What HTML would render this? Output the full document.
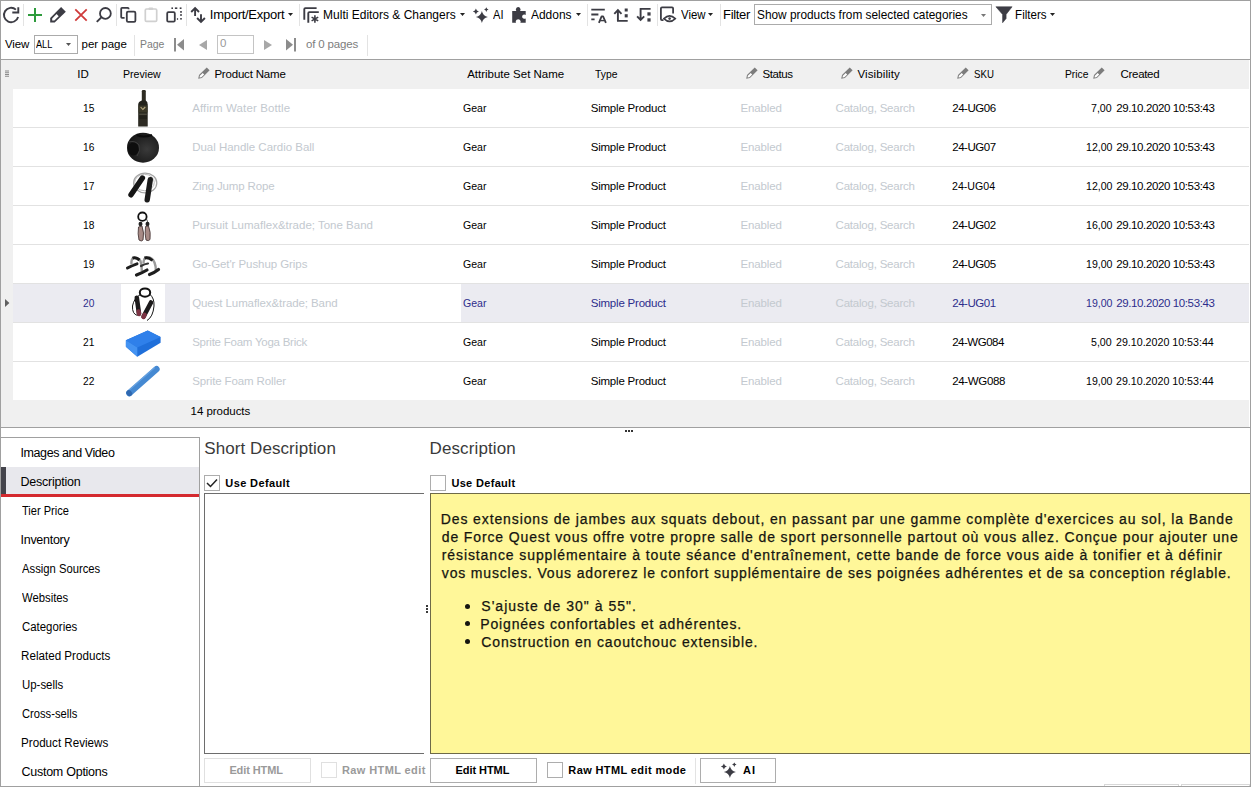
<!DOCTYPE html>
<html><head><meta charset="utf-8"><style>
html,body{margin:0;padding:0;background:#fff}
#r{position:relative;width:1251px;height:787px;overflow:hidden;background:#fff;font-family:"Liberation Sans",sans-serif}
.t{position:absolute;white-space:pre;font-family:"Liberation Sans",sans-serif}
.b{position:absolute}
svg.b{overflow:visible}
</style></head><body><div id="r">
<div class="b" style="left:0px;top:0px;width:1251px;height:1px;background:#a0a0a0"></div>
<div class="b" style="left:0px;top:0px;width:1px;height:787px;background:#a0a0a0"></div>
<div class="b" style="left:1250px;top:0px;width:1px;height:787px;background:#a0a0a0"></div>
<div class="b" style="left:0px;top:786px;width:1251px;height:1px;background:#a0a0a0"></div>
<div class="b" style="left:23px;top:4px;width:1px;height:22px;background:#e3e3e3"></div>
<div class="b" style="left:116px;top:4px;width:1px;height:22px;background:#e3e3e3"></div>
<div class="b" style="left:186px;top:4px;width:1px;height:22px;background:#e3e3e3"></div>
<div class="t" style="left:209.80px;top:7.00px;font-size:13px;line-height:15px;color:#000;letter-spacing:-0.268px;">Import/Export</div>
<svg class="b" style="left:288px;top:13px" width="5" height="3" viewBox="0 0 5 3"><path d="M0 0 H5 L2.5 3 Z" fill="#222"/></svg>
<div class="b" style="left:299px;top:4px;width:1px;height:22px;background:#e3e3e3"></div>
<div class="t" style="left:322.50px;top:7.00px;font-size:13px;line-height:15px;color:#000;transform:scaleX(0.9220);transform-origin:1.00px 0;">Multi Editors &amp; Changers</div>
<svg class="b" style="left:460px;top:13px" width="5" height="3" viewBox="0 0 5 3"><path d="M0 0 H5 L2.5 3 Z" fill="#222"/></svg>
<div class="t" style="left:493.00px;top:7.00px;font-size:13px;line-height:15px;color:#000;transform:scaleX(0.8568);transform-origin:0.00px 0;">AI</div>
<div class="t" style="left:531.00px;top:7.00px;font-size:13px;line-height:15px;color:#000;transform:scaleX(0.9195);transform-origin:0.00px 0;">Addons</div>
<svg class="b" style="left:576px;top:13px" width="5" height="3" viewBox="0 0 5 3"><path d="M0 0 H5 L2.5 3 Z" fill="#222"/></svg>
<div class="b" style="left:587px;top:4px;width:1px;height:22px;background:#e3e3e3"></div>
<div class="b" style="left:657px;top:4px;width:1px;height:22px;background:#e3e3e3"></div>
<div class="t" style="left:681.00px;top:7.00px;font-size:13px;line-height:15px;color:#000;transform:scaleX(0.8755);transform-origin:0.00px 0;">View</div>
<svg class="b" style="left:708px;top:13px" width="5" height="3" viewBox="0 0 5 3"><path d="M0 0 H5 L2.5 3 Z" fill="#222"/></svg>
<div class="b" style="left:720px;top:4px;width:1px;height:22px;background:#e3e3e3"></div>
<div class="t" style="left:723.00px;top:7.00px;font-size:13px;line-height:15px;color:#000;letter-spacing:-0.312px;">Filter</div>
<div class="b" style="left:754px;top:4px;width:238px;height:21px;border:1px solid #ababab;box-sizing:border-box;background:#fff"></div>
<div class="t" style="left:757.00px;top:7.00px;font-size:13px;line-height:15px;color:#000;transform:scaleX(0.9106);transform-origin:0.00px 0;">Show products from selected categories</div>
<svg class="b" style="left:981px;top:14px" width="5" height="3" viewBox="0 0 5 3"><path d="M0 0 H5 L2.5 3 Z" fill="#777"/></svg>
<div class="t" style="left:1015.00px;top:7.00px;font-size:13px;line-height:15px;color:#000;transform:scaleX(0.8886);transform-origin:1.00px 0;">Filters</div>
<svg class="b" style="left:1050px;top:13px" width="5" height="3" viewBox="0 0 5 3"><path d="M0 0 H5 L2.5 3 Z" fill="#222"/></svg>
<svg class="b" style="left:0;top:0" width="1251" height="30" viewBox="0 0 1251 30"><path d="M15.9 9.6 A7.2 7.2 0 1 0 18.1 16.9" fill="none" stroke="#3c3c44" stroke-width="1.9"/><path d="M12.3 12.5 H18.3 V7.3" fill="none" stroke="#3c3c44" stroke-width="1.9"/><path d="M35 8 V22 M28 15 H42" stroke="#2e9b3c" stroke-width="2"/><path d="M61.1 7.1 L65.8 11.8 L54.7 22.4 L50.2 22.4 L50.2 17.9 Z" fill="#3c3c44"/><path d="M52.2 20.6 L52.2 18.6 L56.6 14.1 L58.7 16.2 L54.3 20.6 Z" fill="#fff"/><path d="M75.3 9.3 L86.7 20.7 M86.7 9.3 L75.3 20.7" stroke="#cf3a3a" stroke-width="1.8"/><circle cx="105.4" cy="13.4" r="5.4" fill="none" stroke="#3c3c44" stroke-width="1.8"/><path d="M101.6 17.1 L96.8 21.9" stroke="#3c3c44" stroke-width="2"/><path d="M128.6 9.3 V8.7 Q128.6 7.9 127.8 7.9 H122 Q121.2 7.9 121.2 8.7 V17 Q121.2 17.8 122 17.8 H124.6" fill="none" stroke="#3c3c44" stroke-width="1.8"/><rect x="126.8" y="11.6" width="8.6" height="10.3" rx="1.3" fill="none" stroke="#3c3c44" stroke-width="1.8"/><rect x="145.3" y="9" width="11.4" height="12.4" rx="1.2" fill="none" stroke="#d0d0d0" stroke-width="1.7"/><rect x="148.6" y="7.5" width="4.6" height="2.6" rx="0.8" fill="#d0d0d0"/><rect x="167.2" y="12.2" width="7.6" height="9.4" rx="1.2" fill="none" stroke="#3c3c44" stroke-width="1.8"/><g fill="#3c3c44"><rect x="171.4" y="7.4" width="1.6" height="1.6"/><rect x="174.9" y="7.4" width="2.4" height="1.6"/><rect x="179.7" y="7.4" width="1.8" height="1.6"/><rect x="180.2" y="11" width="1.6" height="1.8"/><rect x="180.2" y="14.1" width="1.6" height="1.8"/><rect x="180.2" y="18" width="1.6" height="1.6"/><rect x="176.9" y="18.2" width="1.2" height="1.6"/></g><path d="M195.1 16 V8.5 M191.2 12 L195.1 8.1 L199 12" fill="none" stroke="#3c3c44" stroke-width="1.9"/><path d="M201 14.2 V21.5 M197.1 18 L201 21.9 L204.9 18" fill="none" stroke="#3c3c44" stroke-width="1.9"/><path d="M304.3 19.7 V9.2 Q304.3 8.1 305.4 8.1 H316.6" fill="none" stroke="#3c3c44" stroke-width="1.9"/><path d="M308.3 22.7 V13.2 Q308.3 12.1 309.4 12.1 H318.8" fill="none" stroke="#3c3c44" stroke-width="1.9"/><path d="M314.9 15.2 V22.8 M311.6 17.1 L318.2 20.9 M318.2 17.1 L311.6 20.9" stroke="#3c3c44" stroke-width="1.6"/><path d="M481.9 11.100000000000001 Q482.91999999999996 16.080000000000002 487.9 17.1 Q482.91999999999996 18.12 481.9 23.1 Q480.88 18.12 475.9 17.1 Q480.88 16.080000000000002 481.9 11.100000000000001 Z" fill="#3c3c44"/><path d="M475.9 8.4 Q476.40999999999997 10.89 478.9 11.4 Q476.40999999999997 11.91 475.9 14.4 Q475.39 11.91 472.9 11.4 Q475.39 10.89 475.9 8.4 Z" fill="#3c3c44"/><path d="M486.3 7.3 Q486.69100000000003 9.209 488.6 9.6 Q486.69100000000003 9.991 486.3 11.899999999999999 Q485.909 9.991 484.0 9.6 Q485.909 9.209 486.3 7.3 Z" fill="#3c3c44"/><path d="M512.2 11 H516.4 Q515.6 9.9 515.9 8.9 Q516.5 7 518.2 7 Q519.9 7 520.5 8.9 Q520.8 9.9 520 11 H525.7 V15 Q524.9 14.4 523.9 14.6 Q522.1 15 522.1 16.7 Q522.1 18.4 523.9 18.8 Q524.9 19 525.7 18.4 V22.8 H520.3 Q520.9 21.9 520.6 21 Q520.1 19.3 518.2 19.3 Q516.3 19.3 515.8 21 Q515.5 21.9 516.1 22.8 H512.2 Z" fill="#3c3c44"/><path d="M591.3 9.6 H604.8 M591.3 14.5 H598.4 M591.3 19.4 H594.6" stroke="#3c3c44" stroke-width="1.9"/><path d="M598.9 22.8 L601.6 16.4 H603.1 L605.9 22.8" fill="none" stroke="#3c3c44" stroke-width="1.8" stroke-linejoin="round"/><path d="M600.2 20.6 H604.5" stroke="#3c3c44" stroke-width="1.4"/><path d="M617.9 21 V10.2 M614.3 13.8 L617.9 10.2 L621.5 13.8 M617 20.9 H627.7" fill="none" stroke="#3c3c44" stroke-width="1.9"/><rect x="624.7" y="8.5" width="3" height="3" fill="#3c3c44"/><rect x="624.7" y="14.2" width="3" height="3.2" fill="#3c3c44"/><path d="M640.6 8.9 V20.2 M637.1 16.4 L640.6 19.9 L644.2 16.4 M639.7 8.9 H650.6" fill="none" stroke="#3c3c44" stroke-width="1.9"/><rect x="647.4" y="12.3" width="3.2" height="3.3" fill="#3c3c44"/><rect x="647.4" y="18.3" width="3.2" height="3.3" fill="#3c3c44"/><path d="M663.5 20.2 H662 Q660.9 20.2 660.9 19.1 V8.5 Q660.9 7.4 662 7.4 H672 Q673.1 7.4 673.1 8.5 V13.6" fill="none" stroke="#3c3c44" stroke-width="1.8"/><path d="M663.9 18.6 Q669.6 13 675.3 18.6 Q669.6 24.2 663.9 18.6 Z" fill="#fff" stroke="#3c3c44" stroke-width="1.6"/><circle cx="669.6" cy="18.6" r="1.3" fill="#3c3c44"/><path d="M995.9 6.8 H1012.1 L1006.1 14.4 V18.6 L1002.6 22.7 V14.4 Z" fill="#3c3c44" stroke="#3c3c44" stroke-width="0.6" stroke-linejoin="round"/></svg>
<div class="t" style="left:5.00px;top:37.52px;font-size:11.5px;line-height:13px;color:#000;letter-spacing:-0.138px;">View</div>
<div class="b" style="left:34px;top:35px;width:44px;height:19px;border:1px solid #ababab;box-sizing:border-box;background:#fff"></div>
<div class="t" style="left:36.00px;top:37.52px;font-size:11.5px;line-height:13px;color:#000;transform:scaleX(0.7975);transform-origin:0.00px 0;">ALL</div>
<svg class="b" style="left:66px;top:43px" width="5" height="3" viewBox="0 0 5 3"><path d="M0 0 H5 L2.5 3 Z" fill="#555"/></svg>
<div class="t" style="left:81.50px;top:37.52px;font-size:11.5px;line-height:13px;color:#000;letter-spacing:-0.000px;">per page</div>
<div class="b" style="left:134px;top:35px;width:1px;height:21px;background:#e3e3e3"></div>
<div class="t" style="left:140.40px;top:37.52px;font-size:11.5px;line-height:13px;color:#7d7d7d;transform:scaleX(0.9070);transform-origin:0.00px 0;">Page</div>
<svg class="b" style="left:174px;top:38px" width="11" height="14" viewBox="0 0 11 14"><rect x="0" y="0" width="2" height="13.5" fill="#8c8c8c"/><path d="M10 1 V12.5 L3 6.75 Z" fill="#8c8c8c"/></svg>
<svg class="b" style="left:199px;top:39.5px" width="8" height="10" viewBox="0 0 8 10"><path d="M8 0 V10 L0 5 Z" fill="#a8a8a8"/></svg>
<div class="b" style="left:217px;top:35px;width:37px;height:19px;border:1px solid #c4c4c4;box-sizing:border-box;background:#fff"></div>
<div class="t" style="left:220.00px;top:37.12px;font-size:11.5px;line-height:13px;color:#999;">0</div>
<svg class="b" style="left:263.5px;top:39.5px" width="8" height="10" viewBox="0 0 8 10"><path d="M0 0 V10 L8 5 Z" fill="#a8a8a8"/></svg>
<svg class="b" style="left:286px;top:38px" width="11" height="14" viewBox="0 0 11 14"><path d="M0 1 V12.5 L7 6.75 Z" fill="#8c8c8c"/><rect x="8" y="0" width="2" height="13.5" fill="#8c8c8c"/></svg>
<div class="t" style="left:306.00px;top:37.52px;font-size:11.5px;line-height:13px;color:#7d7d7d;letter-spacing:-0.173px;">of 0 pages</div>
<div class="b" style="left:367px;top:35px;width:1px;height:21px;background:#e3e3e3"></div>
<div class="b" style="left:1px;top:59px;width:1249px;height:1px;background:#a0a0a0"></div>
<div class="b" style="left:1px;top:60px;width:1248px;height:29px;background:#f0f0f0"></div>
<div class="b" style="left:1px;top:88px;width:12px;height:312px;background:#f0f0f0"></div>
<svg class="b" style="left:5px;top:70px" width="4" height="7" viewBox="0 0 4 7"><path d="M0 1 H4 M0 2.75 H4 M0 4.5 H4 M0 6.25 H4" stroke="#8a8a8a" stroke-width="1"/></svg>
<div class="t" style="left:77.20px;top:67.92px;font-size:11.5px;line-height:13px;color:#000;letter-spacing:0.005px;">ID</div>
<div class="t" style="left:123.30px;top:67.92px;font-size:11.5px;line-height:13px;color:#000;transform:scaleX(0.9232);transform-origin:0.00px 0;">Preview</div>
<svg class="b" style="left:198px;top:67px" width="12" height="12" viewBox="0 0 12 12"><path d="M8.7 0.4 L11.6 3.3 L3.9 11 L0.2 11.8 L1 8.1 Z" fill="#7c7c7c"/><path d="M1.5 10.5 L1.9 8.8 L4.7 6 L6.2 7.5 L3.4 10.2 Z" fill="#fff"/></svg>
<div class="t" style="left:214.40px;top:67.92px;font-size:11.5px;line-height:13px;color:#000;letter-spacing:-0.192px;">Product Name</div>
<div class="t" style="left:467.20px;top:67.92px;font-size:11.5px;line-height:13px;color:#000;letter-spacing:-0.009px;">Attribute Set Name</div>
<div class="t" style="left:594.50px;top:67.92px;font-size:11.5px;line-height:13px;color:#000;transform:scaleX(0.9007);transform-origin:0.00px 0;">Type</div>
<svg class="b" style="left:746px;top:67px" width="12" height="12" viewBox="0 0 12 12"><path d="M8.7 0.4 L11.6 3.3 L3.9 11 L0.2 11.8 L1 8.1 Z" fill="#7c7c7c"/><path d="M1.5 10.5 L1.9 8.8 L4.7 6 L6.2 7.5 L3.4 10.2 Z" fill="#fff"/></svg>
<div class="t" style="left:762.40px;top:67.92px;font-size:11.5px;line-height:13px;color:#000;letter-spacing:-0.390px;">Status</div>
<svg class="b" style="left:841px;top:67px" width="12" height="12" viewBox="0 0 12 12"><path d="M8.7 0.4 L11.6 3.3 L3.9 11 L0.2 11.8 L1 8.1 Z" fill="#7c7c7c"/><path d="M1.5 10.5 L1.9 8.8 L4.7 6 L6.2 7.5 L3.4 10.2 Z" fill="#fff"/></svg>
<div class="t" style="left:857.50px;top:67.92px;font-size:11.5px;line-height:13px;color:#000;letter-spacing:0.102px;">Visibility</div>
<svg class="b" style="left:957px;top:67px" width="12" height="12" viewBox="0 0 12 12"><path d="M8.7 0.4 L11.6 3.3 L3.9 11 L0.2 11.8 L1 8.1 Z" fill="#7c7c7c"/><path d="M1.5 10.5 L1.9 8.8 L4.7 6 L6.2 7.5 L3.4 10.2 Z" fill="#fff"/></svg>
<div class="t" style="left:973.90px;top:67.92px;font-size:11.5px;line-height:13px;color:#000;transform:scaleX(0.8397);transform-origin:0.00px 0;">SKU</div>
<div class="t" style="left:1065.30px;top:67.92px;font-size:11.5px;line-height:13px;color:#000;transform:scaleX(0.8952);transform-origin:0.00px 0;">Price</div>
<svg class="b" style="left:1093px;top:67px" width="12" height="12" viewBox="0 0 12 12"><path d="M8.7 0.4 L11.6 3.3 L3.9 11 L0.2 11.8 L1 8.1 Z" fill="#7c7c7c"/><path d="M1.5 10.5 L1.9 8.8 L4.7 6 L6.2 7.5 L3.4 10.2 Z" fill="#fff"/></svg>
<div class="t" style="left:1120.60px;top:67.92px;font-size:11.5px;line-height:13px;color:#000;letter-spacing:-0.319px;">Created</div>
<div class="b" style="left:13px;top:89px;width:1236px;height:38px;background:#fff"></div>
<div class="b" style="left:13px;top:127px;width:1236px;height:1px;background:#e2e2e2"></div>
<div class="t" style="left:82.60px;top:101.52px;font-size:11.5px;line-height:13px;color:#000;transform:scaleX(0.8874);transform-origin:0.00px 0;">15</div>
<div class="t" style="left:192.20px;top:101.52px;font-size:11.5px;line-height:13px;color:#c3c9cf;letter-spacing:0.119px;">Affirm Water Bottle</div>
<div class="t" style="left:463.40px;top:101.52px;font-size:11.5px;line-height:13px;color:#000;transform:scaleX(0.9170);transform-origin:0.00px 0;">Gear</div>
<div class="t" style="left:590.70px;top:101.52px;font-size:11.5px;line-height:13px;color:#000;letter-spacing:-0.206px;">Simple Product</div>
<div class="t" style="left:740.50px;top:101.52px;font-size:11.5px;line-height:13px;color:#c3c9cf;letter-spacing:-0.135px;">Enabled</div>
<div class="t" style="left:835.60px;top:101.52px;font-size:11.5px;line-height:13px;color:#c3c9cf;letter-spacing:-0.219px;">Catalog, Search</div>
<div class="t" style="left:952.20px;top:101.52px;font-size:11.5px;line-height:13px;color:#000;letter-spacing:-0.444px;">24-UG06</div>
<div class="t" style="left:1091.40px;top:101.52px;font-size:11.5px;line-height:13px;color:#000;transform:scaleX(0.9233);transform-origin:0.00px 0;">7,00</div>
<div class="t" style="left:1116.20px;top:101.52px;font-size:11.5px;line-height:13px;color:#000;letter-spacing:-0.379px;">29.10.2020 10:53:43</div>
<svg class="b" style="left:121px;top:89px" width="44" height="38" viewBox="0 0 44 38"><rect x="20.8" y="1" width="4" height="12" rx="1.2" fill="#2e2c22"/><path d="M20.8 11.5 Q17.2 12.5 17.2 15.5 V37.5 H26.7 V15.5 Q26.7 12.5 24.8 11.5 Z" fill="#23221b"/><rect x="17.5" y="16.5" width="9" height="7" fill="#3b3828"/><path d="M19.6 18 L21.9 20.5 L24.3 18" stroke="#b8aa80" stroke-width="1.1" fill="none"/><rect x="18.2" y="24.5" width="7.6" height="1.6" fill="#4d4a3e"/><rect x="18" y="30" width="8" height="7" fill="#33322a" opacity="0.6"/></svg>
<div class="b" style="left:13px;top:128px;width:1236px;height:38px;background:#fff"></div>
<div class="b" style="left:13px;top:166px;width:1236px;height:1px;background:#e2e2e2"></div>
<div class="t" style="left:82.60px;top:140.52px;font-size:11.5px;line-height:13px;color:#000;transform:scaleX(0.8874);transform-origin:0.00px 0;">16</div>
<div class="t" style="left:192.20px;top:140.52px;font-size:11.5px;line-height:13px;color:#c3c9cf;letter-spacing:-0.026px;">Dual Handle Cardio Ball</div>
<div class="t" style="left:463.40px;top:140.52px;font-size:11.5px;line-height:13px;color:#000;transform:scaleX(0.9170);transform-origin:0.00px 0;">Gear</div>
<div class="t" style="left:590.70px;top:140.52px;font-size:11.5px;line-height:13px;color:#000;letter-spacing:-0.206px;">Simple Product</div>
<div class="t" style="left:740.50px;top:140.52px;font-size:11.5px;line-height:13px;color:#c3c9cf;letter-spacing:-0.135px;">Enabled</div>
<div class="t" style="left:835.60px;top:140.52px;font-size:11.5px;line-height:13px;color:#c3c9cf;letter-spacing:-0.219px;">Catalog, Search</div>
<div class="t" style="left:952.20px;top:140.52px;font-size:11.5px;line-height:13px;color:#000;letter-spacing:-0.444px;">24-UG07</div>
<div class="t" style="left:1085.60px;top:140.52px;font-size:11.5px;line-height:13px;color:#000;transform:scaleX(0.9196);transform-origin:0.00px 0;">12,00</div>
<div class="t" style="left:1116.20px;top:140.52px;font-size:11.5px;line-height:13px;color:#000;letter-spacing:-0.379px;">29.10.2020 10:53:43</div>
<svg class="b" style="left:121px;top:128px" width="44" height="38" viewBox="0 0 44 38"><defs><radialGradient id="bg1" cx="0.62" cy="0.55" r="0.6"><stop offset="0" stop-color="#3a3a3a"/><stop offset="1" stop-color="#171717"/></radialGradient></defs><ellipse cx="22" cy="19.7" rx="16" ry="15" fill="url(#bg1)"/><ellipse cx="12.5" cy="21" rx="5.5" ry="6.5" fill="#0e0e0e"/><path d="M8 14 Q14 12 18 17 Q20 23 16 28" stroke="#3d3d3d" stroke-width="1" fill="none"/><path d="M16 7 Q22 10 31 7" stroke="#0c0c0c" stroke-width="2.2" fill="none"/></svg>
<div class="b" style="left:13px;top:167px;width:1236px;height:38px;background:#fff"></div>
<div class="b" style="left:13px;top:205px;width:1236px;height:1px;background:#e2e2e2"></div>
<div class="t" style="left:82.60px;top:179.52px;font-size:11.5px;line-height:13px;color:#000;transform:scaleX(0.8874);transform-origin:0.00px 0;">17</div>
<div class="t" style="left:192.20px;top:179.52px;font-size:11.5px;line-height:13px;color:#c3c9cf;letter-spacing:-0.152px;">Zing Jump Rope</div>
<div class="t" style="left:463.40px;top:179.52px;font-size:11.5px;line-height:13px;color:#000;transform:scaleX(0.9170);transform-origin:0.00px 0;">Gear</div>
<div class="t" style="left:590.70px;top:179.52px;font-size:11.5px;line-height:13px;color:#000;letter-spacing:-0.206px;">Simple Product</div>
<div class="t" style="left:740.50px;top:179.52px;font-size:11.5px;line-height:13px;color:#c3c9cf;letter-spacing:-0.135px;">Enabled</div>
<div class="t" style="left:835.60px;top:179.52px;font-size:11.5px;line-height:13px;color:#c3c9cf;letter-spacing:-0.219px;">Catalog, Search</div>
<div class="t" style="left:952.20px;top:179.52px;font-size:11.5px;line-height:13px;color:#000;transform:scaleX(0.9224);transform-origin:0.00px 0;">24-UG04</div>
<div class="t" style="left:1085.60px;top:179.52px;font-size:11.5px;line-height:13px;color:#000;transform:scaleX(0.9196);transform-origin:0.00px 0;">12,00</div>
<div class="t" style="left:1116.20px;top:179.52px;font-size:11.5px;line-height:13px;color:#000;letter-spacing:-0.379px;">29.10.2020 10:53:43</div>
<svg class="b" style="left:121px;top:167px" width="44" height="38" viewBox="0 0 44 38"><ellipse cx="24.2" cy="16" rx="11.6" ry="9.8" fill="none" stroke="#a5a5a5" stroke-width="1.2"/><ellipse cx="23.5" cy="15.5" rx="9.8" ry="8.2" fill="none" stroke="#bdbdbd" stroke-width="1"/><path d="M21.4 11 L10 27.8" stroke="#151515" stroke-width="5.4" stroke-linecap="round"/><path d="M29.3 12.6 L26.2 32.8" stroke="#1b1b1b" stroke-width="5.4" stroke-linecap="round"/></svg>
<div class="b" style="left:13px;top:206px;width:1236px;height:38px;background:#fff"></div>
<div class="b" style="left:13px;top:244px;width:1236px;height:1px;background:#e2e2e2"></div>
<div class="t" style="left:82.60px;top:218.52px;font-size:11.5px;line-height:13px;color:#000;transform:scaleX(0.8874);transform-origin:0.00px 0;">18</div>
<div class="t" style="left:192.20px;top:218.52px;font-size:11.5px;line-height:13px;color:#c3c9cf;letter-spacing:0.003px;">Pursuit Lumaflex&amp;trade; Tone Band</div>
<div class="t" style="left:463.40px;top:218.52px;font-size:11.5px;line-height:13px;color:#000;transform:scaleX(0.9170);transform-origin:0.00px 0;">Gear</div>
<div class="t" style="left:590.70px;top:218.52px;font-size:11.5px;line-height:13px;color:#000;letter-spacing:-0.206px;">Simple Product</div>
<div class="t" style="left:740.50px;top:218.52px;font-size:11.5px;line-height:13px;color:#c3c9cf;letter-spacing:-0.135px;">Enabled</div>
<div class="t" style="left:835.60px;top:218.52px;font-size:11.5px;line-height:13px;color:#c3c9cf;letter-spacing:-0.219px;">Catalog, Search</div>
<div class="t" style="left:952.20px;top:218.52px;font-size:11.5px;line-height:13px;color:#000;letter-spacing:-0.444px;">24-UG02</div>
<div class="t" style="left:1085.60px;top:218.52px;font-size:11.5px;line-height:13px;color:#000;transform:scaleX(0.9196);transform-origin:0.00px 0;">16,00</div>
<div class="t" style="left:1116.20px;top:218.52px;font-size:11.5px;line-height:13px;color:#000;letter-spacing:-0.379px;">29.10.2020 10:53:43</div>
<svg class="b" style="left:121px;top:206px" width="44" height="38" viewBox="0 0 44 38"><circle cx="21.4" cy="10.7" r="4.2" fill="none" stroke="#111" stroke-width="1.8"/><path d="M25 12 Q27 15 26.5 18" stroke="#333" stroke-width="0.8" fill="none"/><ellipse cx="19.5" cy="18" rx="2" ry="2.2" fill="#222"/><ellipse cx="26.5" cy="18" rx="2" ry="2.2" fill="#222"/><path d="M17.5 21 Q16.5 28 18 34 Q20.5 36 22 34 Q23.5 27 21 20 Z" fill="#a88b86" stroke="#4a3a3a" stroke-width="0.9"/><path d="M24.5 20.5 Q23.5 28 25 34 Q27.5 35.5 29 33.5 Q30 26 27.5 20 Z" fill="#a88b86" stroke="#4a3a3a" stroke-width="0.9"/></svg>
<div class="b" style="left:13px;top:245px;width:1236px;height:38px;background:#fff"></div>
<div class="b" style="left:13px;top:283px;width:1236px;height:1px;background:#e2e2e2"></div>
<div class="t" style="left:82.60px;top:257.52px;font-size:11.5px;line-height:13px;color:#000;transform:scaleX(0.8874);transform-origin:0.00px 0;">19</div>
<div class="t" style="left:192.20px;top:257.52px;font-size:11.5px;line-height:13px;color:#c3c9cf;letter-spacing:-0.068px;">Go-Get&#x27;r Pushup Grips</div>
<div class="t" style="left:463.40px;top:257.52px;font-size:11.5px;line-height:13px;color:#000;transform:scaleX(0.9170);transform-origin:0.00px 0;">Gear</div>
<div class="t" style="left:590.70px;top:257.52px;font-size:11.5px;line-height:13px;color:#000;letter-spacing:-0.206px;">Simple Product</div>
<div class="t" style="left:740.50px;top:257.52px;font-size:11.5px;line-height:13px;color:#c3c9cf;letter-spacing:-0.135px;">Enabled</div>
<div class="t" style="left:835.60px;top:257.52px;font-size:11.5px;line-height:13px;color:#c3c9cf;letter-spacing:-0.219px;">Catalog, Search</div>
<div class="t" style="left:952.20px;top:257.52px;font-size:11.5px;line-height:13px;color:#000;letter-spacing:-0.444px;">24-UG05</div>
<div class="t" style="left:1085.60px;top:257.52px;font-size:11.5px;line-height:13px;color:#000;transform:scaleX(0.9196);transform-origin:0.00px 0;">19,00</div>
<div class="t" style="left:1116.20px;top:257.52px;font-size:11.5px;line-height:13px;color:#000;letter-spacing:-0.379px;">29.10.2020 10:53:43</div>
<svg class="b" style="left:121px;top:245px" width="44" height="38" viewBox="0 0 44 38"><path d="M6.5 23 Q11 20.5 16 18.8" stroke="#1e1e1e" stroke-width="3" stroke-linecap="round" fill="none"/><path d="M10.5 19.5 Q10 14 12.5 12.8 Q17 12 19.5 16 Q21 21 20.8 26" stroke="#9a9a9a" stroke-width="2.4" fill="none"/><path d="M11.5 13.2 Q15 12 18.5 15" stroke="#1a1a1a" stroke-width="3" fill="none"/><path d="M15.5 30 Q21 28 26 25" stroke="#1e1e1e" stroke-width="3.2" stroke-linecap="round" fill="none"/><path d="M22.5 18.5 Q22.5 13 25.5 12.3 Q31 12 33.5 17.5 Q35 21.5 34.8 25" stroke="#9a9a9a" stroke-width="2.4" fill="none"/><path d="M23.5 13 Q27.5 11.8 31.5 15.5" stroke="#1a1a1a" stroke-width="3" fill="none"/><path d="M20 21 Q23.5 19 27 18.5" stroke="#333" stroke-width="2.2" stroke-linecap="round" fill="none"/><path d="M28.5 29.5 Q33 28 37.5 24.5" stroke="#1e1e1e" stroke-width="3.2" stroke-linecap="round" fill="none"/></svg>
<div class="b" style="left:13px;top:284px;width:1236px;height:38px;background:#ebebf1"></div>
<div class="b" style="left:121px;top:284px;width:44px;height:38px;background:#fff"></div>
<div class="b" style="left:190px;top:284px;width:271px;height:38px;background:#fff"></div>
<svg class="b" style="left:5px;top:299px" width="5" height="8" viewBox="0 0 5 8"><path d="M0 0 L4.4 4 L0 8 Z" fill="#606060"/></svg>
<div class="b" style="left:13px;top:322px;width:1236px;height:1px;background:#e2e2e2"></div>
<div class="t" style="left:82.60px;top:296.52px;font-size:11.5px;line-height:13px;color:#2d2d8c;transform:scaleX(0.8874);transform-origin:0.00px 0;">20</div>
<div class="t" style="left:192.20px;top:296.52px;font-size:11.5px;line-height:13px;color:#c3c9cf;letter-spacing:-0.091px;">Quest Lumaflex&amp;trade; Band</div>
<div class="t" style="left:463.40px;top:296.52px;font-size:11.5px;line-height:13px;color:#2d2d8c;transform:scaleX(0.9170);transform-origin:0.00px 0;">Gear</div>
<div class="t" style="left:590.70px;top:296.52px;font-size:11.5px;line-height:13px;color:#2d2d8c;letter-spacing:-0.206px;">Simple Product</div>
<div class="t" style="left:740.50px;top:296.52px;font-size:11.5px;line-height:13px;color:#c3c9cf;letter-spacing:-0.135px;">Enabled</div>
<div class="t" style="left:835.60px;top:296.52px;font-size:11.5px;line-height:13px;color:#c3c9cf;letter-spacing:-0.219px;">Catalog, Search</div>
<div class="t" style="left:952.20px;top:296.52px;font-size:11.5px;line-height:13px;color:#2d2d8c;letter-spacing:-0.444px;">24-UG01</div>
<div class="t" style="left:1085.60px;top:296.52px;font-size:11.5px;line-height:13px;color:#2d2d8c;transform:scaleX(0.9196);transform-origin:0.00px 0;">19,00</div>
<div class="t" style="left:1116.20px;top:296.52px;font-size:11.5px;line-height:13px;color:#2d2d8c;letter-spacing:-0.379px;">29.10.2020 10:53:43</div>
<svg class="b" style="left:121px;top:284px" width="44" height="38" viewBox="0 0 44 38"><ellipse cx="24" cy="8.6" rx="5.2" ry="4.2" fill="none" stroke="#111" stroke-width="2"/><path d="M19.5 10.5 Q13 14 11.5 22 Q11 30 16.5 31.5" stroke="#151515" stroke-width="1" fill="none"/><path d="M28.5 10 Q33.5 14 33 22 Q32 33 26 36.5" stroke="#151515" stroke-width="1" fill="none"/><path d="M15.8 13.8 L18 29.5" stroke="#1c1a1b" stroke-width="4.6" stroke-linecap="round"/><path d="M17.6 27.5 L18.1 30" stroke="#7c3343" stroke-width="4.4" stroke-linecap="round"/><path d="M30 18.5 L22.6 32.5" stroke="#1c1a1b" stroke-width="4.6" stroke-linecap="round"/><path d="M23.6 30.8 L22.5 33" stroke="#7c3343" stroke-width="4.4" stroke-linecap="round"/></svg>
<div class="b" style="left:13px;top:323px;width:1236px;height:38px;background:#fff"></div>
<div class="b" style="left:13px;top:361px;width:1236px;height:1px;background:#e2e2e2"></div>
<div class="t" style="left:82.60px;top:335.52px;font-size:11.5px;line-height:13px;color:#000;transform:scaleX(0.8874);transform-origin:0.00px 0;">21</div>
<div class="t" style="left:192.20px;top:335.52px;font-size:11.5px;line-height:13px;color:#c3c9cf;letter-spacing:-0.244px;">Sprite Foam Yoga Brick</div>
<div class="t" style="left:463.40px;top:335.52px;font-size:11.5px;line-height:13px;color:#000;transform:scaleX(0.9170);transform-origin:0.00px 0;">Gear</div>
<div class="t" style="left:590.70px;top:335.52px;font-size:11.5px;line-height:13px;color:#000;letter-spacing:-0.206px;">Simple Product</div>
<div class="t" style="left:740.50px;top:335.52px;font-size:11.5px;line-height:13px;color:#c3c9cf;letter-spacing:-0.135px;">Enabled</div>
<div class="t" style="left:835.60px;top:335.52px;font-size:11.5px;line-height:13px;color:#c3c9cf;letter-spacing:-0.219px;">Catalog, Search</div>
<div class="t" style="left:952.20px;top:335.52px;font-size:11.5px;line-height:13px;color:#000;letter-spacing:-0.487px;">24-WG084</div>
<div class="t" style="left:1091.40px;top:335.52px;font-size:11.5px;line-height:13px;color:#000;transform:scaleX(0.9233);transform-origin:0.00px 0;">5,00</div>
<div class="t" style="left:1116.20px;top:335.52px;font-size:11.5px;line-height:13px;color:#000;transform:scaleX(0.9263);transform-origin:0.00px 0;">29.10.2020 10:53:44</div>
<svg class="b" style="left:121px;top:323px" width="44" height="38" viewBox="0 0 44 38"><path d="M4.9 17.3 L26.7 7.4 L39.6 13.9 L39.6 19.8 L16.3 33.7 L4.9 23.8 Z" fill="#1f6fda"/><path d="M4.9 17.3 L26.7 7.4 L39.6 13.9 L16.3 24.6 Z" fill="#2f80ea"/><path d="M4.9 17.3 L16.3 24.6 L16.3 33.7 L4.9 23.8 Z" fill="#4493f2"/></svg>
<div class="b" style="left:13px;top:362px;width:1236px;height:38px;background:#fff"></div>
<div class="b" style="left:13px;top:400px;width:1236px;height:1px;background:#e2e2e2"></div>
<div class="t" style="left:82.60px;top:374.52px;font-size:11.5px;line-height:13px;color:#000;transform:scaleX(0.8874);transform-origin:0.00px 0;">22</div>
<div class="t" style="left:192.20px;top:374.52px;font-size:11.5px;line-height:13px;color:#c3c9cf;letter-spacing:-0.120px;">Sprite Foam Roller</div>
<div class="t" style="left:463.40px;top:374.52px;font-size:11.5px;line-height:13px;color:#000;transform:scaleX(0.9170);transform-origin:0.00px 0;">Gear</div>
<div class="t" style="left:590.70px;top:374.52px;font-size:11.5px;line-height:13px;color:#000;letter-spacing:-0.206px;">Simple Product</div>
<div class="t" style="left:740.50px;top:374.52px;font-size:11.5px;line-height:13px;color:#c3c9cf;letter-spacing:-0.135px;">Enabled</div>
<div class="t" style="left:835.60px;top:374.52px;font-size:11.5px;line-height:13px;color:#c3c9cf;letter-spacing:-0.219px;">Catalog, Search</div>
<div class="t" style="left:952.20px;top:374.52px;font-size:11.5px;line-height:13px;color:#000;letter-spacing:-0.345px;">24-WG088</div>
<div class="t" style="left:1085.60px;top:374.52px;font-size:11.5px;line-height:13px;color:#000;transform:scaleX(0.9196);transform-origin:0.00px 0;">19,00</div>
<div class="t" style="left:1116.20px;top:374.52px;font-size:11.5px;line-height:13px;color:#000;transform:scaleX(0.9263);transform-origin:0.00px 0;">29.10.2020 10:53:44</div>
<svg class="b" style="left:121px;top:362px" width="44" height="38" viewBox="0 0 44 38"><path d="M8.3 31.2 L35.5 7.2" stroke="#4589d2" stroke-width="6.3" stroke-linecap="round"/><path d="M7.3 28.8 L33.5 5.8" stroke="#7ab0ea" stroke-width="1.2" stroke-linecap="round" opacity="0.6"/><ellipse cx="8.3" cy="31.2" rx="2.6" ry="3.2" transform="rotate(-42 8.3 31.2)" fill="#2f68b0"/></svg>
<div class="b" style="left:1px;top:400px;width:1248px;height:27px;background:#f0f0f0"></div>
<div class="t" style="left:190.60px;top:405.32px;font-size:11.5px;line-height:13px;color:#000;letter-spacing:-0.044px;">14 products</div>
<div class="b" style="left:1px;top:427px;width:1249px;height:1px;background:#a0a0a0"></div>
<div class="b" style="left:625px;top:430px;width:2px;height:2px;background:#333"></div>
<div class="b" style="left:628px;top:430px;width:2px;height:2px;background:#333"></div>
<div class="b" style="left:631px;top:430px;width:2px;height:2px;background:#333"></div>
<div class="b" style="left:1px;top:437px;width:199px;height:1px;background:#a0a0a0"></div>
<div class="b" style="left:199px;top:437px;width:1px;height:349px;background:#a0a0a0"></div>
<div class="b" style="left:1px;top:467px;width:198px;height:27px;background:#e8e8ed"></div>
<div class="b" style="left:1px;top:467px;width:5px;height:27px;background:#44444c"></div>
<div class="b" style="left:1px;top:494px;width:198px;height:3px;background:#d42a2f"></div>
<div class="t" style="left:20.50px;top:445.67px;font-size:12.5px;line-height:14px;color:#000;letter-spacing:-0.412px;">Images and Video</div>
<div class="t" style="left:20.50px;top:474.67px;font-size:12.5px;line-height:14px;color:#000;letter-spacing:-0.227px;">Description</div>
<div class="t" style="left:21.50px;top:503.67px;font-size:12.5px;line-height:14px;color:#000;transform:scaleX(0.8857);transform-origin:0.00px 0;">Tier Price</div>
<div class="t" style="left:20.50px;top:532.67px;font-size:12.5px;line-height:14px;color:#000;letter-spacing:-0.271px;">Inventory</div>
<div class="t" style="left:21.50px;top:561.67px;font-size:12.5px;line-height:14px;color:#000;transform:scaleX(0.9007);transform-origin:0.00px 0;">Assign Sources</div>
<div class="t" style="left:21.50px;top:590.67px;font-size:12.5px;line-height:14px;color:#000;transform:scaleX(0.9032);transform-origin:0.00px 0;">Websites</div>
<div class="t" style="left:21.50px;top:619.67px;font-size:12.5px;line-height:14px;color:#000;transform:scaleX(0.9136);transform-origin:0.00px 0;">Categories</div>
<div class="t" style="left:20.50px;top:648.67px;font-size:12.5px;line-height:14px;color:#000;transform:scaleX(0.9299);transform-origin:1.00px 0;">Related Products</div>
<div class="t" style="left:21.50px;top:677.67px;font-size:12.5px;line-height:14px;color:#000;transform:scaleX(0.9132);transform-origin:0.00px 0;">Up-sells</div>
<div class="t" style="left:21.50px;top:706.67px;font-size:12.5px;line-height:14px;color:#000;transform:scaleX(0.8934);transform-origin:0.00px 0;">Cross-sells</div>
<div class="t" style="left:20.50px;top:735.67px;font-size:12.5px;line-height:14px;color:#000;transform:scaleX(0.9294);transform-origin:1.00px 0;">Product Reviews</div>
<div class="t" style="left:21.50px;top:764.67px;font-size:12.5px;line-height:14px;color:#000;letter-spacing:-0.259px;">Custom Options</div>
<div class="t" style="left:204.30px;top:439.11px;font-size:17px;line-height:20px;color:#3a3a3a;letter-spacing:0.073px;">Short Description</div>
<div class="b" style="left:204px;top:475px;width:16px;height:16px;border:1px solid #adadad;box-sizing:border-box;background:#fff"></div>
<svg class="b" style="left:206px;top:478px" width="12" height="10" viewBox="0 0 12 10"><path d="M1 5 L4.5 8.5 L11 1.5" fill="none" stroke="#222" stroke-width="1.5"/></svg>
<div class="t" style="left:225.30px;top:476.69px;font-size:11px;line-height:13px;color:#000;font-weight:700;letter-spacing:0.385px;">Use Default</div>
<div class="b" style="left:204px;top:493px;width:220px;height:261px;border:1px solid #6d6d6d;border-right:none;box-sizing:border-box;background:#fff"></div>
<div class="b" style="left:204px;top:758px;width:107px;height:25px;border:1px solid #e0e0e0;box-sizing:border-box;background:#fff"></div>
<div class="t" style="left:229.40px;top:764.19px;font-size:11px;line-height:13px;color:#9a9a9a;font-weight:700;letter-spacing:-0.107px;">Edit HTML</div>
<div class="b" style="left:321px;top:762px;width:16px;height:16px;border:1px solid #e0e0e0;box-sizing:border-box;background:#fff"></div>
<div class="b" style="left:342px;top:760px;width:84px;height:22px;overflow:hidden">
<div class="t" style="left:0.00px;top:4.19px;font-size:11px;line-height:13px;color:#9a9a9a;font-weight:700;letter-spacing:0.388px;">Raw HTML edit mode</div>
</div>
<div class="t" style="left:429.50px;top:439.11px;font-size:17px;line-height:20px;color:#3a3a3a;letter-spacing:0.122px;">Description</div>
<div class="b" style="left:430px;top:475px;width:16px;height:16px;border:1px solid #adadad;box-sizing:border-box;background:#fff"></div>
<div class="t" style="left:451.40px;top:476.69px;font-size:11px;line-height:13px;color:#000;font-weight:700;letter-spacing:0.325px;">Use Default</div>
<div class="b" style="left:430px;top:493px;width:820px;height:261px;border:1px solid #6e6a48;border-right:none;box-sizing:border-box;background:#fff799"></div>
<div class="t" style="left:440.80px;top:511.15px;font-size:14px;line-height:16px;color:#151510;letter-spacing:0.883px;-webkit-text-stroke:0.25px #151510;">Des extensions de jambes aux squats debout, en passant par une gamme complète d&#x27;exercices au sol, la Bande</div>
<div class="t" style="left:441.80px;top:529.25px;font-size:14px;line-height:16px;color:#151510;letter-spacing:0.870px;-webkit-text-stroke:0.25px #151510;">de Force Quest vous offre votre propre salle de sport personnelle partout où vous allez. Conçue pour ajouter une</div>
<div class="t" style="left:441.80px;top:547.35px;font-size:14px;line-height:16px;color:#151510;letter-spacing:0.892px;-webkit-text-stroke:0.25px #151510;">résistance supplémentaire à toute séance d&#x27;entraînement, cette bande de force vous aide à tonifier et à définir</div>
<div class="t" style="left:441.80px;top:565.45px;font-size:14px;line-height:16px;color:#151510;letter-spacing:0.834px;-webkit-text-stroke:0.25px #151510;">vos muscles. Vous adorerez le confort supplémentaire de ses poignées adhérentes et de sa conception réglable.</div>
<div class="b" style="left:464.5px;top:603.8px;width:5px;height:5px;background:#151510;border-radius:50%"></div>
<div class="t" style="left:481.30px;top:598.35px;font-size:14px;line-height:16px;color:#151510;letter-spacing:1.020px;-webkit-text-stroke:0.25px #151510;">S&#x27;ajuste de 30&quot; à 55&quot;.</div>
<div class="b" style="left:464.5px;top:621.4499999999999px;width:5px;height:5px;background:#151510;border-radius:50%"></div>
<div class="t" style="left:480.30px;top:616.00px;font-size:14px;line-height:16px;color:#151510;letter-spacing:0.827px;-webkit-text-stroke:0.25px #151510;">Poignées confortables et adhérentes.</div>
<div class="b" style="left:464.5px;top:639.0999999999999px;width:5px;height:5px;background:#151510;border-radius:50%"></div>
<div class="t" style="left:481.30px;top:633.65px;font-size:14px;line-height:16px;color:#151510;letter-spacing:0.860px;-webkit-text-stroke:0.25px #151510;">Construction en caoutchouc extensible.</div>
<div class="b" style="left:430px;top:758px;width:107px;height:25px;border:1px solid #adadad;box-sizing:border-box;background:#fff"></div>
<div class="t" style="left:455.60px;top:764.19px;font-size:11px;line-height:13px;color:#000;font-weight:700;letter-spacing:-0.070px;">Edit HTML</div>
<div class="b" style="left:547px;top:762px;width:16px;height:16px;border:1px solid #adadad;box-sizing:border-box;background:#fff"></div>
<div class="t" style="left:568.30px;top:764.19px;font-size:11px;line-height:13px;color:#000;font-weight:700;letter-spacing:0.388px;">Raw HTML edit mode</div>
<div class="b" style="left:695px;top:758px;width:1px;height:26px;background:#e3e3e3"></div>
<div class="b" style="left:700px;top:758px;width:76px;height:25px;border:1px solid #adadad;box-sizing:border-box;background:#fff"></div>
<svg class="b" style="left:0;top:0" width="1251" height="787" viewBox="0 0 1251 787"><path d="M729.9 766.1 Q730.92 771.08 735.9 772.1 Q730.92 773.12 729.9 778.1 Q728.88 773.12 723.9 772.1 Q728.88 771.08 729.9 766.1 Z" fill="#3c3c44"/><path d="M723.9 763.4 Q724.41 765.89 726.9 766.4 Q724.41 766.91 723.9 769.4 Q723.39 766.91 720.9 766.4 Q723.39 765.89 723.9 763.4 Z" fill="#3c3c44"/><path d="M734.3 762.3000000000001 Q734.6909999999999 764.2090000000001 736.5999999999999 764.6 Q734.6909999999999 764.991 734.3 766.9 Q733.909 764.991 732.0 764.6 Q733.909 764.2090000000001 734.3 762.3000000000001 Z" fill="#3c3c44"/></svg>
<div class="t" style="left:743.00px;top:764.19px;font-size:11px;line-height:13px;color:#000;font-weight:700;letter-spacing:1.056px;">AI</div>
<div class="b" style="left:1104px;top:784px;width:75px;height:2px;border:1px solid #d8d8d8;border-bottom:none;box-sizing:border-box"></div>
<div class="b" style="left:1181px;top:784px;width:69px;height:2px;border:1px solid #d8d8d8;border-bottom:none;box-sizing:border-box"></div>
<div class="b" style="left:426px;top:605px;width:2px;height:2px;background:#3a3a3a"></div>
<div class="b" style="left:426px;top:608px;width:2px;height:2px;background:#3a3a3a"></div>
<div class="b" style="left:426px;top:611px;width:2px;height:2px;background:#3a3a3a"></div>
</div></body></html>
